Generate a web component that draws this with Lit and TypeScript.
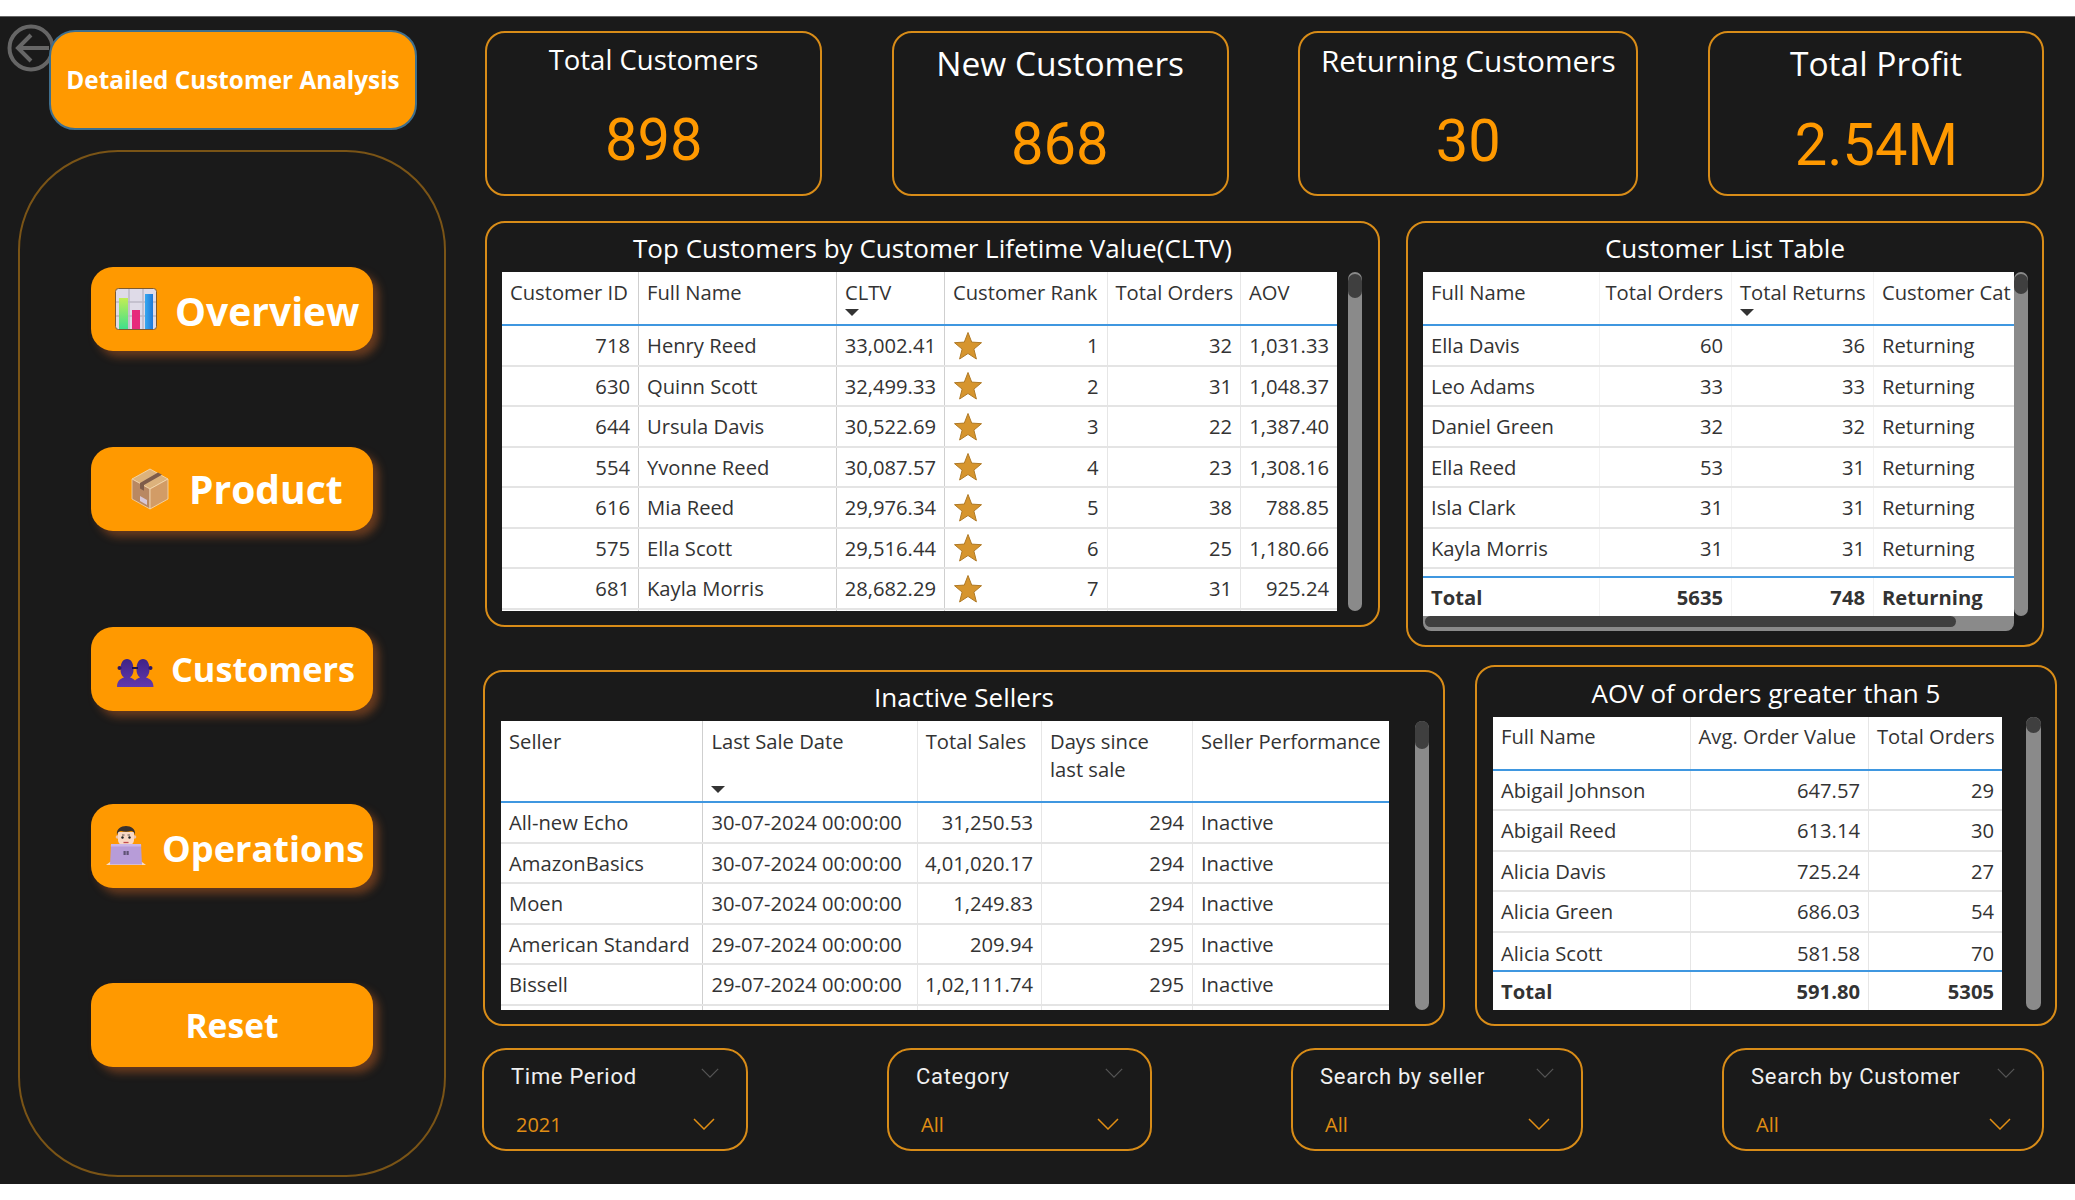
import {LitElement, html, css, svg} from 'lit';
import {customElement} from 'lit/decorators.js';

type Col = {label: string; w: number; right?: boolean; headRight?: boolean; sort?: boolean; strong?: boolean; wrap?: boolean};
type Table = {
  name: string;
  cols: Col[];
  rows: (string | number)[][];
  total?: string[];
};

const star = svg`<svg class="star" viewBox="0 0 30 29" width="30" height="29"><path d="M15 1.500l3.700 9.600 9.800.6-7.600 6.400 2.500 9.900L15 22.500 6.600 28l2.500-9.900-7.600-6.400 9.800-.6z" fill="#d6952e" stroke="#b07a26" stroke-width="1"/></svg>`;

const topCustomers: Table = {
  name: 'top',
  cols: [
    {label: 'Customer ID', w: 137, right: true, strong: true},
    {label: 'Full Name', w: 198, strong: true},
    {label: 'CLTV', w: 108, right: true, sort: true, strong: true},
    {label: 'Customer Rank', w: 162.5, right: true},
    {label: 'Total Orders', w: 133.5, right: true},
    {label: 'AOV', w: 96, right: true},
  ],
  rows: [
    [718, 'Henry Reed', '33,002.41', 1, 32, '1,031.33'],
    [630, 'Quinn Scott', '32,499.33', 2, 31, '1,048.37'],
    [644, 'Ursula Davis', '30,522.69', 3, 22, '1,387.40'],
    [554, 'Yvonne Reed', '30,087.57', 4, 23, '1,308.16'],
    [616, 'Mia Reed', '29,976.34', 5, 38, '788.85'],
    [575, 'Ella Scott', '29,516.44', 6, 25, '1,180.66'],
    [681, 'Kayla Morris', '28,682.29', 7, 31, '925.24'],
    ['', '', '', '', '', ''],
  ],
};

const customerList: Table = {
  name: 'list',
  cols: [
    {label: 'Full Name', w: 177},
    {label: 'Total Orders', w: 132, right: true, headRight: true},
    {label: 'Total Returns', w: 142, right: true, sort: true},
    {label: 'Customer Cat', w: 140},
  ],
  rows: [
    ['Ella Davis', 60, 36, 'Returning'],
    ['Leo Adams', 33, 33, 'Returning'],
    ['Daniel Green', 32, 32, 'Returning'],
    ['Ella Reed', 53, 31, 'Returning'],
    ['Isla Clark', 31, 31, 'Returning'],
    ['Kayla Morris', 31, 31, 'Returning'],
  ],
  total: ['Total', '5635', '748', 'Returning'],
};

const inactiveSellers: Table = {
  name: 'sellers',
  cols: [
    {label: 'Seller', w: 202.4, strong: true},
    {label: 'Last Sale Date', w: 214.3, sort: true},
    {label: 'Total Sales', w: 124.3, right: true},
    {label: 'Days since last sale', w: 151, right: true, wrap: true},
    {label: 'Seller Performance', w: 196},
  ],
  rows: [
    ['All-new Echo', '30-07-2024 00:00:00', '31,250.53', 294, 'Inactive'],
    ['AmazonBasics', '30-07-2024 00:00:00', '4,01,020.17', 294, 'Inactive'],
    ['Moen', '30-07-2024 00:00:00', '1,249.83', 294, 'Inactive'],
    ['American Standard', '29-07-2024 00:00:00', '209.94', 295, 'Inactive'],
    ['Bissell', '29-07-2024 00:00:00', '1,02,111.74', 295, 'Inactive'],
    ['', '', '', '', ''],
  ],
};

const aovOrders: Table = {
  name: 'aov',
  cols: [
    {label: 'Full Name', w: 197.6},
    {label: 'Avg. Order Value', w: 178.4, right: true},
    {label: 'Total Orders', w: 133, right: true},
  ],
  rows: [
    ['Abigail Johnson', '647.57', 29],
    ['Abigail Reed', '613.14', 30],
    ['Alicia Davis', '725.24', 27],
    ['Alicia Green', '686.03', 54],
    ['Alicia Scott', '581.58', 70],
  ],
  total: ['Total', '591.80', '5305'],
};

const kpis = [
  {label: 'Total Customers', value: '898', cls: 'k1'},
  {label: 'New Customers', value: '868', cls: 'k2'},
  {label: 'Returning Customers', value: '30', cls: 'k3'},
  {label: 'Total Profit', value: '2.54M', cls: 'k4'},
];

const slicers = [
  {label: 'Time Period', value: '2021', cls: 's1'},
  {label: 'Category', value: 'All', cls: 's2'},
  {label: 'Search by seller', value: 'All', cls: 's3'},
  {label: 'Search by Customer', value: 'All', cls: 's4'},
];

const chartIcon = svg`<svg viewBox="0 0 42 42" width="42" height="42">
  <defs>
    <linearGradient id="gb" x1="0" y1="0" x2="0" y2="1"><stop offset="0" stop-color="#c2ee55"/><stop offset="1" stop-color="#3fdf8c"/></linearGradient>
    <linearGradient id="bb" x1="0" y1="0" x2="1" y2="0"><stop offset="0" stop-color="#37a8f0"/><stop offset="1" stop-color="#1f78d8"/></linearGradient>
  </defs>
  <rect x=".5" y=".5" width="41" height="41" rx="3" fill="#dfdbe8" stroke="#7d5a30"/>
  <path d="M14 1v40M28 1v40M1 14h40M1 28h40" stroke="#bdb9c6" stroke-width="1.500"/>
  <rect x="4" y="10" width="9" height="31" fill="url(#gb)"/>
  <rect x="17" y="22" width="8" height="19" fill="#e62a7c"/>
  <rect x="30" y="6" width="8" height="35" fill="url(#bb)"/>
</svg>`;

const boxIcon = svg`<svg viewBox="0 0 38 42" width="38" height="42">
  <path d="M19 1L37 11 19 21 1 11z" fill="#dcb27c" stroke="#f4dcb8" stroke-width=".8"/>
  <path d="M1 11l18 10v20L1 31z" fill="#b98862" stroke="#f0d4b0" stroke-width=".8"/>
  <path d="M37 11L19 21v20l18-10z" fill="#d29c66" stroke="#f4dcb8" stroke-width=".8"/>
  <path d="M27 4.500L9 14.900v5.600l4 2.200v-5.600L31 6.800z" fill="#7e5c4a"/>
  <path d="M9 28l7 4v5l-7-4z" fill="#d8c8d8"/>
</svg>`;

const peopleIcon = svg`<svg class="people" viewBox="0 0 38 30" width="38" height="30">
  <defs><linearGradient id="pp" x1="0" y1="0" x2="0" y2="1"><stop offset="0" stop-color="#3f2386"/><stop offset="1" stop-color="#6238ae"/></linearGradient></defs>
  <path d="M1 29c0-6 3-8 7-9.500-2.500-2-3.500-4.500-3.500-8C4.500 5 7 1 11 1s6.500 4 6.500 10.500c0 3.500-1 6-3.500 8 4 1.500 7 3.500 7 9.500z" fill="url(#pp)"/>
  <path d="M17 29c0-6 3-8 7-9.500-2.500-2-3.500-4.500-3.500-8C20.500 5 23 1 27 1s6.500 4 6.500 10.500c0 3.500-1 6-3.500 8 4 1.500 7.500 3.500 7.500 9.500z" fill="url(#pp)"/>
  <path d="M16 10h6" stroke="#20124a" stroke-width="2"/>
  <circle cx="3.500" cy="10" r="2" fill="#2c1866"/><circle cx="34.500" cy="10" r="2" fill="#2c1866"/>
</svg>`;

const workerIcon = svg`<svg viewBox="0 0 40 40" width="40" height="40">
  <circle cx="11.500" cy="11" r="1.800" fill="#eec2a8"/><circle cx="28.500" cy="11" r="1.800" fill="#eec2a8"/>
  <path d="M12 7c0 0 0-1 0-1h16v8c0 3.500-3.500 6.500-8 6.500S12 17.500 12 14z" fill="#f8d8c4"/>
  <path d="M11 9C10 3 15 0 20 0s10 3 9 9c-1-3-2-4-4-4-3 1-7 1-10 0-2 0-3 1-4 4z" fill="#3a322e"/>
  <circle cx="16.500" cy="11.500" r="1.200" fill="#222"/><circle cx="23.500" cy="11.500" r="1.200" fill="#222"/>
  <path d="M16 9h2.500M21.500 9H24" stroke="#3a322e" stroke-width=".8"/>
  <path d="M17.500 16.500h5" stroke="#c04a50" stroke-width="1.300"/>
  <path d="M0 39l4-3h32l4 3z" fill="#f8dcc8"/>
  <path d="M5 18h30l1 20.500H4z" fill="#b79cd8"/>
  <path d="M5 18h30l.2 2.500H4.800z" fill="#cbb6e6"/>
  <rect x="17.500" y="25" width="2.200" height="4" fill="#5f5274"/><rect x="20.500" y="25" width="2.200" height="4" fill="#5f5274"/>
</svg>`;

const chevron = svg`<svg viewBox="0 0 22 12" fill="none"><path d="M1 1l10 10L21 1" stroke="currentColor" stroke-width="1.500"/></svg>`;

@customElement('app-root')
export class AppRoot extends LitElement {
  renderTable(t: Table) {
    const template = t.cols.map((c) => `${c.w}px`).join(' ');
    const cell = (val: unknown, c: Col, i: number) => html`
      <div class="cell ${c.right ? 'right' : ''} ${c.strong ? 'strong' : ''}">
        ${t.name === 'top' && i === 3 && val !== '' ? star : ''}<span>${val}</span>
      </div>
    `;
    return html`
      <div class="table ${t.name}">
        <div class="head" style="grid-template-columns:${template}">
          ${t.cols.map((c) => html`
            <div class="hcell ${c.headRight ? 'right' : ''} ${c.strong ? 'strong' : ''}">
              <span class="hlabel ${c.wrap ? 'wrap' : ''}">${c.label}</span>
              ${c.sort ? html`<i class="sort"></i>` : ''}
            </div>
          `)}
        </div>
        <div class="rows">
          ${t.rows.map((r) => html`
            <div class="row" style="grid-template-columns:${template}">
              ${r.map((v, i) => cell(v, t.cols[i], i))}
            </div>
          `)}
        </div>
        ${t.total ? html`
          <div class="total" style="grid-template-columns:${template}">
            ${t.total.map((v, i) => html`<div class="cell ${t.cols[i].right ? 'right' : ''}"><span>${v}</span></div>`)}
          </div>
        ` : ''}
      </div>
    `;
  }

  render() {
    return html`
      <main class="page">
        <aside class="side">
          <svg class="back" viewBox="0 0 48 48" width="48" height="48" fill="none" stroke="#666" stroke-width="4">
            <circle cx="24" cy="24" r="21.500"/>
            <path d="M42 24H12M24 11L11 24l13 13"/>
          </svg>
          <div class="title-btn">Detailed Customer Analysis</div>
          <nav class="nav">
            <a class="nav-btn overview">${chartIcon}<span>Overview</span></a>
            <a class="nav-btn product">${boxIcon}<span>Product</span></a>
            <a class="nav-btn customers">${peopleIcon}<span>Customers</span></a>
            <a class="nav-btn operations">${workerIcon}<span>Operations</span></a>
            <a class="nav-btn reset"><span>Reset</span></a>
          </nav>
        </aside>
        <section class="content">
          <div class="kpis">
            ${kpis.map((k) => html`
              <div class="kpi ${k.cls}">
                <div class="kpi-label">${k.label}</div>
                <div class="kpi-value">${k.value}</div>
              </div>
            `)}
          </div>
          <div class="mid">
            <div class="panel p-top">
              <div class="panel-title">Top Customers by Customer Lifetime Value(CLTV)</div>
              <div class="body">
                ${this.renderTable(topCustomers)}
                <div class="vbar"><div class="thumb"></div></div>
              </div>
            </div>
            <div class="panel p-list">
              <div class="panel-title">Customer List Table</div>
              <div class="body">
                ${this.renderTable(customerList)}
                <div class="vbar"><div class="thumb"></div></div>
              </div>
              <div class="hbar"><div class="hthumb"></div></div>
            </div>
          </div>
          <div class="lower">
            <div class="panel p-sellers">
              <div class="panel-title">Inactive Sellers</div>
              <div class="body">
                ${this.renderTable(inactiveSellers)}
                <div class="vbar"><div class="thumb"></div></div>
              </div>
            </div>
            <div class="panel p-aov">
              <div class="panel-title">AOV of orders greater than 5</div>
              <div class="body">
                ${this.renderTable(aovOrders)}
                <div class="vbar"><div class="thumb"></div></div>
              </div>
            </div>
          </div>
          <div class="slicers">
            ${slicers.map((s) => html`
              <div class="slicer ${s.cls}">
                <div class="slicer-head"><span>${s.label}</span><i class="chev-dim">${chevron}</i></div>
                <div class="slicer-value"><span>${s.value}</span><i class="chev">${chevron}</i></div>
              </div>
            `)}
          </div>
        </section>
      </main>
    `;
  }

  static styles = css`
    :host {
      display: block;
      width: 2075px;
      height: 1200px;
      background: #fff;
      padding-top: 16px;
      box-sizing: border-box;
      font-family: "Open Sans", "Noto Sans", sans-serif;
      overflow: hidden;
    }
    .page {
      display: flex;
      height: 1168px;
      background: #1a1a1a;
      border-top: 1px solid #666;
      box-sizing: border-box;
    }

    /* left column */
    .side {
      position: relative;
      width: 482px;
      flex: none;
      box-sizing: border-box;
    }
    .back {
      position: absolute;
      left: 7px;
      top: 7px;
    }
    .title-btn {
      position: relative;
      margin: 13px 0 0 49px;
      width: 368px;
      height: 100px;
      box-sizing: border-box;
      border: 2px solid #3e6f8e;
      border-radius: 26px;
      padding-bottom: 2px;
      background: #ff9900;
      color: #fff;
      font-weight: 700;
      font-size: 24.3px;
      display: flex;
      align-items: center;
      justify-content: center;
      white-space: nowrap;
    }
    .nav {
      margin: 20px 0 0 18px;
      width: 428px;
      height: 1027px;
      box-sizing: border-box;
      border: 2px solid #7a5416;
      border-radius: 100px;
      padding: 115px 0 0 71px;
      display: flex;
      flex-direction: column;
      gap: 96px;
    }
    .nav-btn {
      width: 282px;
      height: 84px;
      flex: none;
      box-sizing: border-box;
      border-radius: 22px;
      background: #ff9900;
      box-shadow: 6px 6px 8px rgba(230, 110, 40, 0.38);
      color: #fff;
      font-weight: 700;
      display: flex;
      align-items: center;
      white-space: nowrap;
    }
    .overview { padding-left: 24px; gap: 18px; font-size: 39px; }
    .overview span { margin-top: 2px; }
    .product { padding-left: 40px; gap: 20px; font-size: 39px; }
    .product span { margin-top: -2px; }
    .customers { padding-left: 25px; gap: 17px; font-size: 34.3px; }
    .customers span { margin-top: -2px; }
    .people { margin-top: 8px; }
    .operations { padding-left: 15px; gap: 16px; font-size: 36.200px; margin-top: -3px; }
    .operations span { margin-top: 3px; }
    .reset { justify-content: center; font-size: 33.600px; margin-top: -1px; }

    /* right column */
    .content {
      width: 1593px;
      flex: none;
    }
    .kpis {
      display: flex;
      justify-content: space-between;
      width: 1559px;
      margin: 14px 0 0 3px;
    }
    .kpi {
      width: 337px;
      height: 165px;
      box-sizing: border-box;
      border: 2px solid #d88c18;
      border-radius: 20px;
      display: flex;
      flex-direction: column;
      align-items: center;
      color: #fff;
    }
    .k3 { width: 340px; }
    .k4 { width: 336px; }
    .kpi-label { font-size: 27.500px; line-height: 36px; margin-top: 9px; white-space: nowrap; }
    .kpi-value {
      color: #ff9900;
      font-family: Roboto, sans-serif;
      font-weight: 400;
      font-size: 59px;
      line-height: 70px;
      margin-top: 27px;
      transform: scaleX(0.98);
    }
    .k2 .kpi-label, .k4 .kpi-label { font-size: 33.500px; line-height: 42px; margin-top: 9px; }
    .k3 .kpi-label { font-size: 29.800px; margin-top: 10px; }
    .k3 .kpi-value { margin-top: 27px; }
    .k2 .kpi-value { margin-top: 25px; }
    .k4 .kpi-value { margin-top: 26px; }

    .mid {
      display: flex;
      align-items: flex-start;
      gap: 26px;
      margin: 25px 0 0 3px;
    }
    .lower {
      display: flex;
      align-items: flex-end;
      gap: 30px;
      margin: 18px 0 0 1px;
    }
    .panel {
      box-sizing: border-box;
      border: 2px solid #d88c18;
      border-radius: 20px;
      color: #fff;
    }
    .panel-title {
      height: 49px;
      box-sizing: border-box;
      padding-top: 1px;
      display: flex;
      align-items: center;
      justify-content: center;
      font-size: 26px;
      white-space: nowrap;
    }
    .p-top { width: 895px; height: 406px; }
    .p-list { width: 638px; height: 426px; }
    .p-sellers { width: 962px; height: 356px; }
    .p-aov { width: 582px; height: 361px; }
    .p-aov .panel-title { height: 50px; }

    .body { display: flex; align-items: stretch; padding-left: 15px; }
    .p-sellers .body, .p-aov .body { padding-left: 16px; }
    .p-top .body { gap: 11px; }
    .p-sellers .body { gap: 26px; }
    .p-aov .body { gap: 24px; }

    .table {
      background: #fff;
      color: #333;
      display: flex;
      flex-direction: column;
      overflow: hidden;
      font-size: 20.200px;
    }
    .top { width: 835px; height: 339px; }
    .list { width: 591px; height: 344px; }
    .sellers { width: 888px; height: 289px; }
    .aov { width: 509px; height: 293px; }

    .head, .row, .total { display: grid; flex: none; }
    .head {
      height: 54px;
      box-sizing: border-box;
      border-bottom: 2px solid #3f97e0;
    }
    .sellers .head { height: 82px; }
    .aov .head { height: 53.500px; }
    .hcell {
      display: flex;
      flex-direction: column;
      align-items: flex-start;
      box-sizing: border-box;
      padding: 6px 2px 8px 8px;
      border-right: 1px solid #e6e6e6;
      line-height: 28px;
      overflow: hidden;
    }
    .aov .hcell { padding-top: 5px; }
    .hlabel { white-space: nowrap; }
    .hlabel.wrap { white-space: normal; max-width: 110px; }
    .hcell.right { align-items: flex-end; padding-right: 8px; }
    .hcell.strong, .cell.strong { border-right-color: #cfcfcf; }
    .list .hcell, .list .cell { border-right-color: #f2f2f2; }
    .hcell:last-child, .cell:last-child { border-right: 0; }
    .sort {
      margin-top: auto;
      width: 0;
      height: 0;
      border-left: 7px solid transparent;
      border-right: 7px solid transparent;
      border-top: 7px solid #333;
    }
    .rows { flex: 1; overflow: hidden; }
    .row {
      height: 40.500px;
      box-sizing: border-box;
      border-bottom: 2px solid #e4e4e4;
    }
    .aov .rows .row:last-child { border-bottom: 0; }
    .total {
      height: 40px;
      box-sizing: border-box;
      border-top: 2px solid #3f97e0;
      font-weight: 700;
    }
    .cell {
      display: flex;
      align-items: center;
      justify-content: flex-start;
      box-sizing: border-box;
      padding: 0 8px;
      border-right: 1px solid #e6e6e6;
      white-space: nowrap;
      overflow: hidden;
    }
    .cell.right { justify-content: flex-end; }
    .star { margin-right: auto; flex: none; }

    .vbar {
      width: 14px;
      flex: none;
      background: #8a8a8a;
      border-radius: 7px;
    }
    .thumb {
      width: 14px;
      height: 24px;
      background: #3f3f3f;
      border-radius: 7px;
      margin-top: 2px;
    }
    .p-sellers .thumb { height: 28px; margin: 0; }
    .p-aov .vbar { width: 15px; }
    .p-aov .thumb { width: 15px; height: 16px; border-radius: 8px; margin: 0; }
    .p-list .thumb { height: 20px; }
    .hbar {
      width: 591px;
      height: 15px;
      margin: -1px 0 0 15px;
      background: #8a8a8a;
      border-radius: 0 0 8px 8px;
    }
    .hthumb {
      width: 531px;
      height: 11px;
      margin: 1px 0 0 2px;
      background: #3f3f3f;
      border-radius: 6px;
    }

    .slicers {
      display: flex;
      justify-content: space-between;
      width: 1562px;
      margin-top: 22px;
    }
    .slicer {
      height: 103px;
      box-sizing: border-box;
      border: 2px solid #d88c18;
      border-radius: 24px;
      padding: 0 28px 0 27px;
    }
    .s1 { width: 266px; }
    .s2 { width: 265px; }
    .s3 { width: 292px; }
    .s4 { width: 322px; }
    .slicer-head {
      display: flex;
      justify-content: space-between;
      align-items: flex-start;
      height: 50px;
      padding-top: 11px;
      box-sizing: border-box;
      color: #f0f0f0;
      font-family: Roboto, sans-serif;
      font-size: 22px;
      line-height: 32px;
      letter-spacing: 0.7px;
    }
    .chev-dim {
      display: block;
      width: 18px;
      height: 10px;
      color: #555;
      margin-top: 7px;
      margin-right: -1px;
    }
    .slicer-value {
      display: flex;
      justify-content: space-between;
      align-items: center;
      height: 48px;
      padding-left: 5px;
      color: #e08e14;
      font-size: 20px;
    }
    .chev {
      display: block;
      width: 22px;
      height: 12px;
      margin-right: 3px;
      line-height: 0;
    }
    i svg { display: block; width: 100%; height: 100%; }
  `;
}

declare global {
  interface HTMLElementTagNameMap {
    'app-root': AppRoot;
  }
}
